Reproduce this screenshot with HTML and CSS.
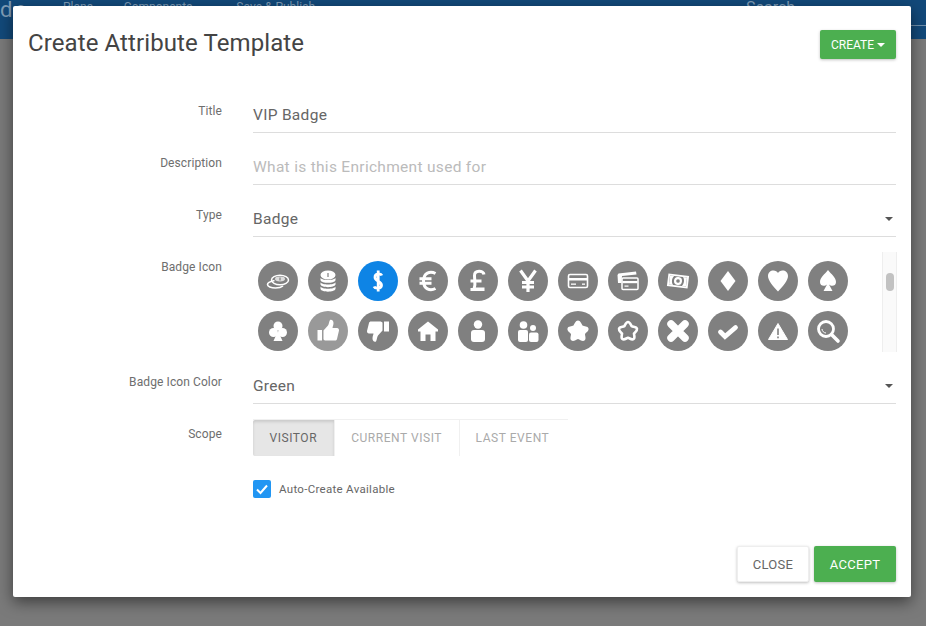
FILE: index.html
```html
<!DOCTYPE html>
<html lang="en">
<head>
  <meta charset="UTF-8" />
  <title>Create Attribute Template</title>
  <link rel="stylesheet" href="styles.css">
</head>
<body>
  <nav class="topbar">
    <span class="brand">de</span>
    <span class="nav-item nav-plans">Plans</span>
    <span class="nav-item nav-comp">Components</span>
    <span class="nav-item">Save &amp; Publish</span>
    <span class="nav-search">Search</span>
  </nav>

  <div class="modal">
    <header class="modal-head">
      <h1>Create Attribute Template</h1>
      <button class="btn btn-green btn-small">CREATE <i class="caret caret-white"></i></button>
    </header>

    <div class="row">
      <label>Title</label>
      <div class="field">VIP Badge</div>
    </div>
    <div class="row">
      <label>Description</label>
      <div class="field placeholder">What is this Enrichment used for</div>
    </div>
    <div class="row">
      <label>Type</label>
      <div class="field select">Badge <i class="caret"></i></div>
    </div>
    <div class="row row-icons">
      <label>Badge Icon</label>
      <div class="icon-box">
        <div class="icon-grid">
          <span class="ic"><svg viewBox="-20 -20 40 40"><path d="M-3.500-.5C-8 .5-10.500 2-10.500 3.500c0 2 3.500 3.500 8 3.500 3.500 0 6-.8 7.500-2" fill="none" stroke="#fff" stroke-width="1.600"/><ellipse cx="2" cy="-1" rx="8.500" ry="4.800" fill="none" stroke="#fff" stroke-width="1.500"/><ellipse cx="2" cy="-2" rx="5" ry="2.400" fill="#ddd"/><rect x="1.400" y="-3.500" width="1.200" height="3" fill="#808080"/></svg></span>
          <span class="ic"><svg viewBox="-20 -20 40 40"><g fill="#fff"><ellipse cx="0" cy="-6" rx="7.500" ry="4.500"/><path d="M-7.500-3.200c1 3 14 3 15 0V-.8c-1 3.500-14 3.500-15 0zM-7.500 1.200c1 3 14 3 15 0v2.400c-1 3.500-14 3.500-15 0zM-7.500 5.600c1 3 14 3 15 0V8c-1 3.500-14 3.500-15 0z"/></g><rect x="-.6" y="-8" width="1.200" height="4" fill="#808080"/></svg></span>
          <span class="ic ic-on"><svg viewBox="-20 -20 40 40"><path d="M3.800-5.500C3-7.800-3-8-3-3.800-3 .5 3.500 0 3.500 4.200 3.500 8-3 7.800-4 5.500M.2-10.500v21" fill="none" stroke="#fff" stroke-width="2.800"/></svg></span>
          <span class="ic"><svg viewBox="-20 -20 40 40"><path d="M7.500-7.500C2-10.500-4.500-8-4.500 0S2 10.500 7.500 7.500M-8.500-2.200H3.500M-8.500 2.200H3.500" fill="none" stroke="#fff" stroke-width="3"/></svg></span>
          <span class="ic"><svg viewBox="-20 -20 40 40"><path d="M6-6.500C5.500-11-3.500-11-3.500-5.500c0 5 1.500 8-.5 13.500H6.500M-7.500 0H3.500M-7.500 8.500H6.500" fill="none" stroke="#fff" stroke-width="3"/></svg></span>
          <span class="ic"><svg viewBox="-20 -20 40 40"><path d="M-7.500-10.500L0 0l7.500-10.500M0 0v11M-6 1.500H6M-6 6H6" fill="none" stroke="#fff" stroke-width="3.200"/></svg></span>
          <span class="ic"><svg viewBox="-20 -20 40 40"><rect x="-9.500" y="-6.500" width="19" height="13" rx="1.500" fill="none" stroke="#fff" stroke-width="1.600"/><rect x="-9" y="-3" width="18" height="2.500" fill="#fff"/><rect x="-7" y="2.500" width="5" height="1.300" fill="#fff"/><rect x="4" y="2.500" width="3" height="1.300" fill="#fff"/></svg></span>
          <span class="ic"><svg viewBox="-20 -20 40 40"><path d="M-10 2l-.5-8 1-1.500L8-9.500 8.500-6.500-6-5-6.500 2z" fill="#fff"/><g transform="translate(2 2.500)"><rect x="-8" y="-5.500" width="16" height="11.500" rx="1" fill="#808080" stroke="#fff" stroke-width="1.500"/><rect x="-7.500" y="-2.500" width="15" height="2.200" fill="#fff"/><rect x="-5.500" y="2" width="4" height="1.200" fill="#fff"/></g></svg></span>
          <span class="ic"><svg viewBox="-20 -20 40 40"><g transform="rotate(7)"><rect x="-9.500" y="-5.500" width="19" height="11" fill="none" stroke="#fff" stroke-width="1.800"/><path d="M-8.500-4.500h4C-6.500-2-6.500 2-4.500 4.500h-4zM8.500-4.500h-4C6.500-2 6.500 2 4.500 4.500h4z" fill="#fff"/><circle r="4" fill="#fff"/><circle r="1.800" fill="#808080"/></g></svg></span>
          <span class="ic"><svg viewBox="-20 -20 40 40"><path d="M0-10L7.500 0 0 10-7.500 0z" fill="#fff"/></svg></span>
          <span class="ic"><svg viewBox="-20 -20 40 40"><path d="M0 10.500C-5 5.500-10-.5-10-5c0-3.500 2.500-5.500 5.500-5.500C-2.500-10.500-.8-9.500 0-8c.8-1.500 2.500-2.500 4.500-2.500 3 0 5.500 2 5.500 5.500 0 4.500-5 10.500-10 15.500z" fill="#fff"/></svg></span>
          <span class="ic"><svg viewBox="-20 -20 40 40"><path d="M0-11C3-7 8-3.500 8 1c0 4-4.500 5-7 2.500L4.500 10h-9L-1 3.500C-3.500 6-8 5-8 1-8-3.500-3-7 0-11z" fill="#fff"/></svg></span>

          <span class="ic"><svg viewBox="-20 -20 40 40"><g fill="#fff"><circle cy="-5" r="4.500"/><circle cx="-4.500" cy="1.500" r="4.500"/><circle cx="4.500" cy="1.500" r="4.500"/><path d="M-1 2H1L4.500 10h-9z"/></g></svg></span>
          <span class="ic ic-soft"><svg viewBox="-20 -20 40 40"><g fill="#fff"><rect x="-10.500" y="-1" width="4.500" height="10.500"/><path d="M-4.500-.5L0-5.500C1-7 1-9.500 2-11c2-.8 3.500 1 3.500 3 0 2-.8 3.500-1 5h4.500c1.500 0 2 1 2 2.500L9 8c-.3 1-1 1.500-2 1.500H-2c-1 0-2.500-.5-2.500-1.500z"/></g></svg></span>
          <span class="ic"><svg viewBox="-20 -20 40 40"><g fill="#fff"><rect x="6" y="-9.500" width="5" height="10"/><path d="M4.500-.5L0 4.500C-1 6-1 8.500-2 10.500c-2 .8-3.500-1-3.500-3 0-2 .8-3.500 1-5H-9c-1.500 0-2-1-2-2.500L-9-8c.3-1 1-1.500 2-1.500H2c1 0 2.500.5 2.500 1.500z"/></g></svg></span>
          <span class="ic"><svg viewBox="-20 -20 40 40"><path d="M0-9.500L10 -1.500V.5H7.500V10H2.500V3.500h-5V10h-5V.5H-10v-2z" fill="#fff"/></svg></span>
          <span class="ic"><svg viewBox="-20 -20 40 40"><g fill="#fff"><circle cy="-6.500" r="4.200"/><rect x="-7" y="-1" width="14" height="12" rx="3"/></g></svg></span>
          <span class="ic"><svg viewBox="-20 -20 40 40"><g fill="#fff"><circle cx="-4.500" cy="-6" r="3.800"/><circle cx="5" cy="-3" r="3"/><rect x="-10" y="-1" width="10" height="12" rx="2"/><rect x="1" y="1.500" width="9.500" height="9.500" rx="2"/></g></svg></span>
          <span class="ic"><svg viewBox="-20 -20 40 40"><path d="M0-10.500C2.500-10.500 3.500-7 4.500-5.500 6-4.500 10-5 10.500-2.500 11 0 8 1.500 7 3c0 2 1.500 5-.5 6.500C4.500 11 2 8.500 0 8c-2 .5-4.500 3-6.500 1.500C-8.500 8-7 5-7 3c-1-1.500-4-3-3.500-5.500C-10-5-6-4.500-4.500-5.500-3.500-7-2.500-10.500 0-10.500z" fill="#fff"/></svg></span>
          <span class="ic"><svg viewBox="-20 -20 40 40"><path d="M0-9C2-9 2.800-6 3.700-4.800 5-4 8.500-4.300 9-2.300 9.400 0 7 1.200 6 2.500c0 1.800 1.300 4.300-.4 5.500C3.800 9.300 1.700 7.200 0 6.800-1.700 7.200-3.800 9.300-5.600 8-7.300 6.800-6 4.300-6 2.500-7 1.200-9.400 0-9-2.300-8.500-4.300-5-4-3.700-4.800-2.800-6-2-9 0-9z" fill="none" stroke="#fff" stroke-width="2.600"/></svg></span>
          <span class="ic"><svg viewBox="-20 -20 40 40"><path d="M-7-7L7 7M7-7L-7 7" fill="none" stroke="#fff" stroke-width="7.500" stroke-linecap="round"/></svg></span>
          <span class="ic"><svg viewBox="-20 -20 40 40"><path d="M-7.500 1L-3 5.500 7.500-3.500" fill="none" stroke="#fff" stroke-width="4.800" stroke-linecap="round"/></svg></span>
          <span class="ic"><svg viewBox="-20 -20 40 40"><path d="M0-7.500L9.500 8.500H-9.500z" fill="#fff" stroke="#fff" stroke-width="1" stroke-linejoin="round"/><rect x="-.8" y="-2.500" width="1.600" height="6.500" fill="#808080"/><rect x="-.8" y="5.500" width="1.600" height="1.800" fill="#808080"/></svg></span>
          <span class="ic"><svg viewBox="-20 -20 40 40"><circle cx="-2" cy="-2" r="7.500" fill="none" stroke="#fff" stroke-width="2.800"/><path d="M3.500 3.500L10 10" stroke="#fff" stroke-width="3.600" stroke-linecap="round"/><path d="M-6-2c0 2 2 4 4 4" fill="none" stroke="#fff" stroke-width="1"/></svg></span>
        </div>
        <div class="scroll-track"><span class="scroll-thumb"></span></div>
      </div>
    </div>
    <div class="row">
      <label>Badge Icon Color</label>
      <div class="field select">Green <i class="caret"></i></div>
    </div>
    <div class="row row-scope">
      <label>Scope</label>
      <div class="tabs">
        <span class="tab tab-on">VISITOR</span>
        <span class="tab">CURRENT VISIT</span>
        <span class="tab">LAST EVENT</span>
      </div>
    </div>
    <div class="check-row">
      <span class="check"><svg viewBox="0 0 18 18" width="18" height="18"><path d="M4 9.500L7.500 13 14 5.500" fill="none" stroke="#fff" stroke-width="2"/></svg></span>
      Auto-Create Available
    </div>

    <footer class="modal-foot">
      <button class="btn btn-white">CLOSE</button>
      <button class="btn btn-green">ACCEPT</button>
    </footer>
  </div>
</body>
</html>
```

FILE: styles.css
```css
* { box-sizing: border-box; }
html, body { height: 100%; }
body {
  margin: 0;
  background-color: #7a7a7a;
  font-family: Roboto, "Liberation Sans", sans-serif;
  color: #555;
  overflow: hidden;
}
.topbar {
  height: 39px;
  background-color: #12497a;
  color: #7f9cb6;
  display: flex;
  align-items: flex-start;
  font-size: 12px;
  line-height: 14px;
  overflow: hidden;
}
.brand { font-size: 22px; line-height: 26px; margin-top: -3px; width: 63px; letter-spacing: 2px; }
.nav-item { margin-right: 31px; }
.nav-plans { margin-right: 31px; }
.nav-comp { margin-right: 44px; }
.nav-search {
  margin-left: 400px;
  flex: 1;
  height: 26px;
  font-size: 16px;
  line-height: 16px;
  border-bottom: 1px solid #6f8fab;
}

.modal {
  position: absolute;
  left: 13px;
  top: 6px;
  width: 898px;
  height: 591px;
  background-color: #fff;
  border-radius: 2px;
  box-shadow: 0 5px 15px rgba(0, 0, 0, 0.5);
  padding: 0 15px;
}
.modal-head {
  display: flex;
  justify-content: space-between;
  align-items: flex-start;
  height: 79px;
}
.modal-head h1 {
  margin: 21px 0 0;
  font-size: 24px;
  font-weight: 400;
  letter-spacing: 0.1px;
  line-height: 32px;
  color: #444;
}
.btn {
  border: none;
  border-radius: 2px;
  font-family: inherit;
  font-size: 13px;
  letter-spacing: 0.3px;
  cursor: pointer;
  box-shadow: 0 1px 3px rgba(0, 0, 0, 0.25);
}
.btn-green { background-color: #4caf50; color: #fff; width: 82px; height: 36px; }
.btn-white { background-color: #fff; color: #666; width: 72px; height: 36px; border: 1px solid #eee; }
.btn-small { width: 76px; height: 29px; font-size: 12px; margin-top: 24px; padding: 0; letter-spacing: 0; }
.caret {
  display: inline-block;
  width: 0;
  height: 0;
  border: 4px solid transparent;
  border-top-color: #555;
  border-bottom: 0;
  vertical-align: 2px;
}
.caret-white { border-top-color: #fff; }

.row {
  display: flex;
  height: 52px;
  align-items: flex-start;
}
.row label {
  width: 194px;
  margin-right: 1px;
  text-align: right;
  font-size: 12px;
  letter-spacing: 0.1px;
  line-height: 14px;
  margin-top: 19px;
  color: #6e6e6e;
  flex: none;
}
.field {
  margin-left: 30px;
  flex: 1;
  height: 48px;
  padding-top: 20px;
  font-size: 15.5px;
  line-height: 20px;
  letter-spacing: 0.3px;
  color: #666;
  border-bottom: 1px solid #ddd;
  position: relative;
}
.placeholder { color: #bbb; }
.select .caret { position: absolute; right: 3px; top: 28px; }
.row-icons { height: 115px; }
.icon-box {
  margin: 11px -1px 0 30px;
  flex: 1;
  display: flex;
  justify-content: space-between;
  height: 100px;
}
.icon-grid {
  display: grid;
  grid-template-columns: repeat(12, 40px);
  gap: 10px;
  padding: 9px 0 0 5px;
  align-content: start;
}
.ic {
  width: 40px;
  height: 40px;
  border-radius: 50%;
  background-color: #808080;
  display: block;
}
.ic svg { display: block; width: 40px; height: 40px; }
.ic-on { background-color: #0e84e5; }
.ic-soft { background-color: #999; }
.scroll-track {
  width: 15px;
  background-color: #fafafa;
  border-left: 1px solid #eee;
  border-right: 1px solid #eee;
  padding: 21px 0 0 3px;
}
.scroll-thumb {
  display: block;
  width: 8px;
  height: 18px;
  border-radius: 4px;
  background-color: #c2c2c2;
}
.tabs {
  margin-left: 30px;
  margin-top: 11px;
  display: flex;
  height: 37px;
  border-top: 1px solid #f0f0f0;
  width: 315px;
}
.tab {
  font-size: 12px;
  letter-spacing: 0.55px;
  line-height: 36px;
  color: #aaa;
  padding: 0 16.5px;
  border-right: 1px solid #f0f0f0;
  white-space: nowrap;
}
.tab:last-child { border-right: none; flex: 1; padding-left: 16px; }
.tab-on {
  background-color: #e6e6e6;
  color: #666;
  border-radius: 2px 0 0 2px;
  box-shadow: inset 0 2px 3px rgba(0, 0, 0, 0.12);
}
.check-row {
  margin: 20px 0 0 225px;
  display: flex;
  align-items: center;
  gap: 8px;
  font-size: 11.5px;
  letter-spacing: 0.3px;
  color: #666;
  height: 18px;
}
.check {
  width: 18px;
  height: 18px;
  border-radius: 2px;
  background-color: #2196f3;
}
.check svg { display: block; }
.modal-foot {
  position: absolute;
  right: 15px;
  bottom: 15px;
  display: flex;
  gap: 5px;
}
```
